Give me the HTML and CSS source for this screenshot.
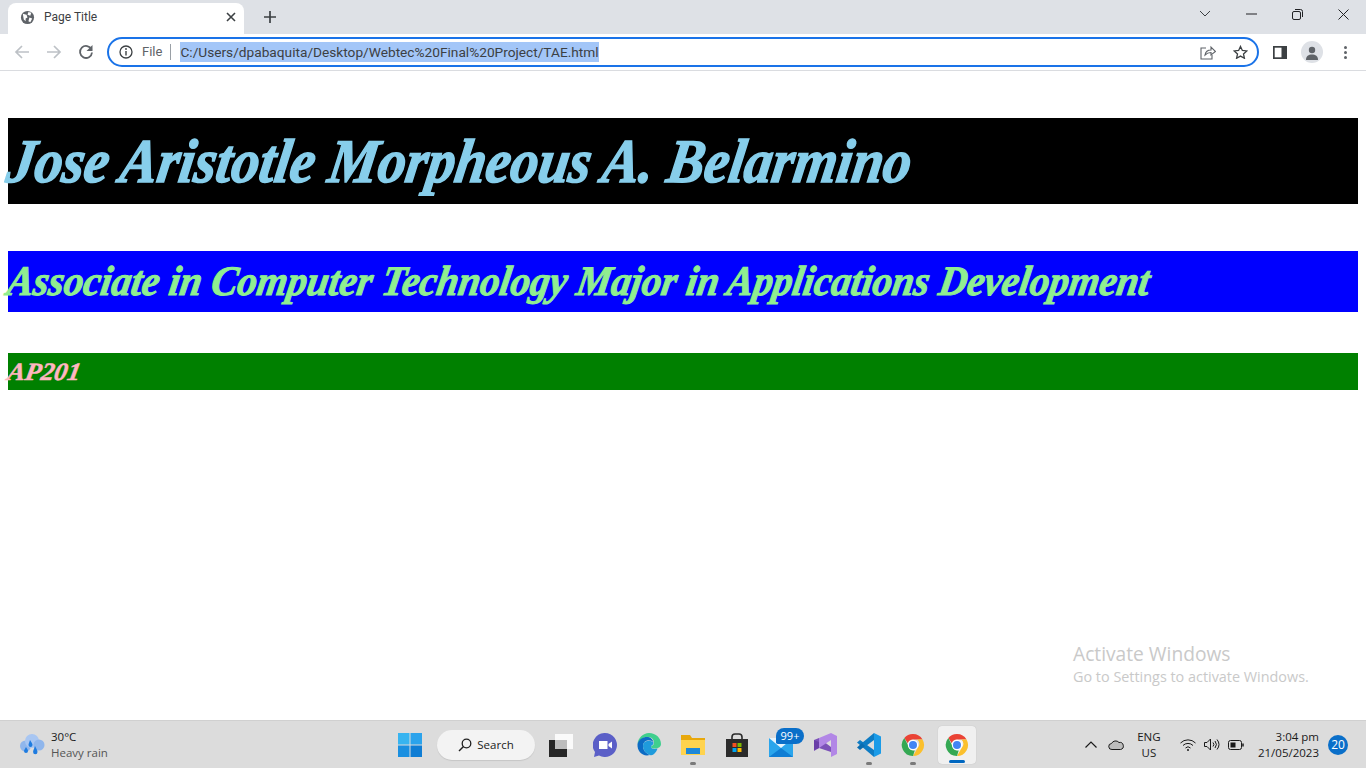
FILE: index.html
```html
<!DOCTYPE html>
<html>
<head>
  <meta charset="UTF-8">
  <title>Page Title</title>
  <link rel="stylesheet" href="styles.css">
</head>
<body>
  <svg class="defs" width="0" height="0">
    <symbol id="chrome" viewBox="0 0 24 24">
      <path d="M12 1a11 11 0 0 1 9.530 5.500H12a5.500 5.500 0 0 0-5.200 3.700L3.300 5A11 11 0 0 1 12 1z" fill="#ea4335"/>
      <path d="M21.530 6.500A11 11 0 0 1 12 23l4.760-8.250a5.500 5.500 0 0 0-.5-8.250z" fill="#fbc02d"/>
      <path d="M12 23A11 11 0 0 1 3.300 5l4.400 8.600a5.500 5.500 0 0 0 6 3.900L12 23z" fill="#34a853"/>
      <circle cx="12" cy="12" r="5.200" fill="#fff"/>
      <circle cx="12" cy="12" r="4" fill="#4285f4"/>
    </symbol>
  </svg>

  <div class="tab-strip">
    <div class="tab">
      <svg class="tab-icon" viewBox="0 0 16 16"><circle cx="8" cy="8" r="7" fill="#5f6368"/><path d="M3 4l4 1 1 3-2 1v3l-2-2zM9 2l3 1-1 3-3-1zM10 8l3 1-2 4-2-1z" fill="#fff"/></svg>
      <span class="tab-title">Page Title</span>
      <svg class="tab-close" viewBox="0 0 10 10"><path d="M1 1l8 8M9 1l-8 8" stroke="#3c4043" stroke-width="1.600"/></svg>
    </div>
    <svg class="new-tab" viewBox="0 0 12 12"><path d="M6 0v12M0 6h12" stroke="#3c4043" stroke-width="1.700"/></svg>
    <div class="window-btns">
      <div class="window-btn"><svg width="12" height="8" viewBox="0 0 12 8"><path d="M1 1l5 5 5-5" fill="none" stroke="#3c4043"/></svg></div>
      <div class="window-btn"><svg width="11" height="2" viewBox="0 0 11 2"><path d="M0 1h11" stroke="#202124"/></svg></div>
      <div class="window-btn"><svg width="11" height="11" viewBox="0 0 11 11"><rect x=".5" y="2.500" width="8" height="8" rx="1.500" fill="none" stroke="#202124"/><path d="M3 .5h5.500a2 2 0 0 1 2 2V8" fill="none" stroke="#202124"/></svg></div>
      <div class="window-btn"><svg width="11" height="11" viewBox="0 0 11 11"><path d="M.5.5l10 10M10.500.5l-10 10" stroke="#202124"/></svg></div>
    </div>
  </div>

  <div class="toolbar">
    <div class="nav-btn"><svg width="16" height="16" viewBox="0 0 16 16"><path d="M15 8H2M8 2L2 8l6 6" fill="none" stroke="#bdc1c6" stroke-width="1.700"/></svg></div>
    <div class="nav-btn"><svg width="16" height="16" viewBox="0 0 16 16"><path d="M1 8h13M8 2l6 6-6 6" fill="none" stroke="#bdc1c6" stroke-width="1.700"/></svg></div>
    <div class="nav-btn"><svg width="16" height="16" viewBox="0 0 16 16"><path d="M13.500 5.500A6 6 0 1 0 14 8.500" fill="none" stroke="#5f6368" stroke-width="1.800"/><path d="M14.500 1v6h-6z" fill="#5f6368"/></svg></div>
    <div class="omnibox">
      <svg class="info-icon" width="14" height="14" viewBox="0 0 14 14"><circle cx="7" cy="7" r="6" fill="none" stroke="#3c4043" stroke-width="1.300"/><path d="M7 6v4.500" stroke="#3c4043" stroke-width="1.400"/><circle cx="7" cy="4" r=".9" fill="#3c4043"/></svg>
      <span class="scheme">File</span>
      <span class="url"><span class="url-selected">C:/Users/dpabaquita/Desktop/Webtec%20Final%20Project/TAE.html</span></span>
      <svg class="omni-share" width="16" height="15" viewBox="0 0 16 15"><path d="M6 3H1v11h11v-4" fill="none" stroke="#5f6368" stroke-width="1.100"/><path d="M5 10c.5-3 3-5 6-5V2l4.500 4.500L11 10V7.500c-2.500 0-4.500 1-6 2.500z" fill="none" stroke="#5f6368" stroke-width="1.100"/></svg>
      <svg class="omni-star" width="15" height="14" viewBox="0 0 16 15"><path d="M8 1.500l2 4.400 4.700.5-3.500 3.200 1 4.600L8 11.900l-4.200 2.300 1-4.600L1.300 6.400 6 5.900z" fill="none" stroke="#3c4043" stroke-width="1.400"/></svg>
    </div>
    <div class="toolbar-right">
      <svg width="14" height="13" viewBox="0 0 14 13"><path d="M0 0h14v13H0z" fill="#3c4043"/><path d="M1.700 1.700h6.800v9.600H1.700z" fill="#fff"/></svg>
      <div class="avatar"><svg width="14" height="14" viewBox="0 0 14 14"><circle cx="7" cy="4" r="3.200" fill="#5f6368"/><path d="M1 14c0-4 2.500-5.500 6-5.500s6 1.500 6 5.500z" fill="#5f6368"/></svg></div>
      <div class="menu-dots"><i></i><i></i><i></i></div>
    </div>
  </div>

  <main class="page">
    <h1 class="band band-name"><span>Jose Aristotle Morpheous A. Belarmino</span></h1>
    <h2 class="band band-course"><span>Associate in Computer Technology Major in Applications Development</span></h2>
    <h3 class="band band-code"><span>AP201</span></h3>
    <div class="watermark">
      <div class="watermark-title">Activate Windows</div>
      <div class="watermark-sub">Go to Settings to activate Windows.</div>
    </div>
  </main>

  <footer class="taskbar">
    <div class="weather">
      <svg width="26" height="26" viewBox="0 0 26 26">
        <circle cx="6.500" cy="14" r="5.500" fill="#8fb6ec"/><circle cx="13" cy="9" r="7" fill="#a8c6f2"/><circle cx="20" cy="13" r="5.500" fill="#8fb6ec"/>
        <path d="M11 8c2 3 2.500 4 2.500 5a2 2 0 0 1-4 0c0-1 .5-2 1.500-5zM7 15c1.500 2.500 2 3 2 4a2 2 0 0 1-4 0c0-1 1-2 2-4zM16 14c1.500 3 2.500 4.500 2.500 6a2.200 2.200 0 0 1-4.400 0c0-1.500 1-3 1.900-6z" fill="#1e7ce0"/>
      </svg>
      <div class="weather-text">
        <div class="weather-temp">30°C</div>
        <div class="weather-desc">Heavy rain</div>
      </div>
    </div>

    <div class="task-icons">
      <div class="task-item start">
        <svg width="24" height="24" viewBox="0 0 24 24"><path d="M0 0h11.500v11.500H0z" fill="#37b4f0"/><path d="M12.500 0H24v11.500H12.500z" fill="#2ba3ec"/><path d="M0 12.500h11.500V24H0z" fill="#1a8fe0"/><path d="M12.500 12.500H24V24H12.500z" fill="#0f7dd4"/></svg>
      </div>
      <div class="search-pill">
        <svg width="14" height="14" viewBox="0 0 14 14"><circle cx="8.500" cy="5.500" r="4.300" fill="none" stroke="#202020" stroke-width="1.300"/><path d="M5.500 8.500L1 13" stroke="#202020" stroke-width="1.500"/></svg>
        <span>Search</span>
      </div>
      <div class="task-item">
        <svg width="24" height="24" viewBox="0 0 24 24"><path d="M6 1h18v15H6z" fill="#fafafa"/><path d="M0 7h18v17H0z" fill="#262626"/><path d="M6 7h12v9H6z" fill="#bdbdbd"/></svg>
      </div>
      <div class="task-item">
        <svg width="24" height="24" viewBox="0 0 24 24"><path d="M12 0a12 12 0 1 1-6 22.400L1 24l1-5A12 12 0 0 1 12 0z" fill="#5b5fc7"/><path d="M6 8h8.500v8H6z" fill="#fff"/><path d="M15.500 11l3.500-2.500v7L15.500 13z" fill="#fff"/></svg>
      </div>
      <div class="task-item">
        <svg width="24" height="24" viewBox="0 0 24 24"><path d="M12 0c7 0 12 5 12 11 0 3-3 4.500-6 4.500-2 0-4-.5-4-1.500 0-2 3-1 3-4C17 6 14 4 11 4 6 4 1.500 7.500.5 11 1 5 6 0 12 0z" fill="#3fcf8e"/><path d="M.5 11C1.500 6.500 6 4 10 4c3 0 6 2 6.500 5.500-2-3-8-3.500-10 1C5 14 7 20 13 22 6 24 0 19 .5 11z" fill="#0c6cc4"/><path d="M6.500 10.500C8 7 14 7 16.500 9.500c.5 2.500-2.500 2.500-2.500 4.500 0 2 4 2.500 6.500 1.500C19 20 16 23 13 22c-6-2-8-8-6.500-11.500z" fill="#1f9bdc"/></svg>
      </div>
      <div class="task-item running">
        <svg width="24" height="24" viewBox="0 0 24 24"><path d="M0 2h9l2 3h13v17H0z" fill="#e8a80c"/><path d="M0 7h24v15H0z" fill="#ffd34e"/><path d="M5 15h14v6H5z" fill="#1e88d8"/></svg>
      </div>
      <div class="task-item">
        <svg width="24" height="24" viewBox="0 0 24 24"><path d="M7 7V4a3 3 0 0 1 3-3h4a3 3 0 0 1 3 3v3" fill="none" stroke="#2b2b2b" stroke-width="1.600"/><path d="M1 6h22v18H1z" fill="#2b2b2b"/><path d="M7.500 10h4v4h-4z" fill="#f25022"/><path d="M12.500 10h4v4h-4z" fill="#7fba00"/><path d="M7.500 15h4v4h-4z" fill="#00a4ef"/><path d="M12.500 15h4v4h-4z" fill="#ffb900"/></svg>
      </div>
      <div class="task-item">
        <svg width="24" height="24" viewBox="0 0 24 24"><path d="M0 5h24v19H0z" fill="#2aa5ec"/><path d="M0 5h24L12 15z" fill="#e8f5fd"/><path d="M0 24l12-9 12 9z" fill="#0f7dd4"/></svg>
        <span class="mail-badge">99+</span>
      </div>
      <div class="task-item">
        <svg width="24" height="24" viewBox="0 0 24 24"><path d="M1 7l5-2 12 9v5l-12-4-5 3z" fill="#7c52b8"/><path d="M6 5l12-5 6 3v18l-6 3V7L6 15z" fill="#b287e6"/><path d="M1 7v10l5-2V9z" fill="#6a3fa8"/></svg>
      </div>
      <div class="task-item running">
        <svg width="24" height="24" viewBox="0 0 24 24"><path d="M17 0l7 3.500v17L17 24V0z" fill="#1a9be8"/><path d="M17 0v7l-8 6-4-3z" fill="#0e7cc4"/><path d="M17 24v-7L3 7 0 9.500z" fill="#0e7cc4"/><path d="M0 14.500L3 17l5-4-3-3z" fill="#0a6cb0"/></svg>
      </div>
      <div class="task-item running">
        <svg width="24" height="24"><use href="#chrome"/></svg>
      </div>
      <div class="task-item active">
        <svg width="24" height="24"><use href="#chrome"/></svg>
      </div>
    </div>

    <div class="tray">
      <svg class="tray-chevron" width="12" height="7" viewBox="0 0 12 7"><path d="M.5 6.500L6 1l5.500 5.500" fill="none" stroke="#1a1a1a" stroke-width="1.200"/></svg>
      <svg class="tray-cloud" width="16" height="11" viewBox="0 0 16 11"><path d="M4 10.500a3 3 0 0 1-.5-6A4.500 4.500 0 0 1 11 3.500a3.500 3.500 0 0 1 1.500 7z" fill="#bcbcbc" stroke="#1a1a1a"/></svg>
      <div class="tray-lang">ENG<br>US</div>
      <div class="tray-status">
        <svg width="16" height="12" viewBox="0 0 16 12"><path d="M.5 4a10.500 10.500 0 0 1 15 0M3 6.500a7 7 0 0 1 10 0M5.500 9a3.500 3.500 0 0 1 5 0" fill="none" stroke="#1a1a1a"/><circle cx="8" cy="11" r="1" fill="#1a1a1a"/></svg>
        <svg width="16" height="13" viewBox="0 0 16 13"><path d="M.5 4.500h2.500l3.500-3.500v11L3 8.500H.5z" fill="none" stroke="#1a1a1a"/><path d="M9 4.500a3 3 0 0 1 0 4M11 3a5.500 5.500 0 0 1 0 7M13 1.500a8 8 0 0 1 0 10" fill="none" stroke="#1a1a1a"/></svg>
        <svg width="16" height="10" viewBox="0 0 16 10"><rect x=".5" y=".5" width="13" height="9" rx="2" fill="none" stroke="#1a1a1a"/><rect x="2.500" y="2.500" width="5" height="5" fill="#1a1a1a"/><path d="M15 3.500v3" stroke="#1a1a1a" stroke-width="1.500"/></svg>
      </div>
      <div class="tray-clock">3:04 pm<br>21/05/2023</div>
      <span class="notif-badge">20</span>
    </div>
  </footer>
</body>
</html>
```

FILE: styles.css
```css
* {
  box-sizing: border-box;
  margin: 0;
  padding: 0;
}

body {
  height: 768px;
  overflow: hidden;
  display: flex;
  flex-direction: column;
  background: #fff;
  font-family: "Open Sans", "Noto Sans", sans-serif;
  color: #202124;
}

.defs {
  position: absolute;
}

.tab-strip {
  height: 34px;
  flex: none;
  display: flex;
  align-items: flex-end;
  background: #dee1e6;
  padding-left: 8px;
}

.tab {
  width: 236px;
  height: 31px;
  padding: 0 7px 3px 12px;
  display: flex;
  align-items: center;
  background: #fff;
  border-radius: 8px 8px 0 0;
}

.tab-icon {
  width: 15px;
  height: 15px;
}

.tab-title {
  flex: 1;
  margin-left: 9px;
  font-family: Roboto, sans-serif;
  font-size: 12px;
  color: #3c4043;
}

.tab-close {
  width: 10px;
  height: 10px;
  margin-right: 1px;
}

.new-tab {
  width: 12px;
  height: 12px;
  margin: 0 0 11px 20px;
}

.window-btns {
  margin-left: auto;
  align-self: flex-start;
  display: flex;
}

.window-btn {
  width: 46px;
  height: 28px;
  display: flex;
  align-items: center;
  justify-content: center;
}

.toolbar {
  height: 37px;
  flex: none;
  display: flex;
  align-items: center;
  padding-left: 6px;
  background: #fff;
  border-bottom: 1px solid #dadce0;
}

.nav-btn {
  width: 32px;
  height: 28px;
  display: flex;
  align-items: center;
  justify-content: center;
}

.omnibox {
  width: 1152px;
  height: 30px;
  margin-left: 5px;
  padding: 0 9px 0 10px;
  display: flex;
  align-items: center;
  border: 2px solid #1a73e8;
  border-radius: 15px;
  font-family: Roboto, sans-serif;
}

.scheme {
  margin-left: 9px;
  padding-right: 8px;
  border-right: 1px solid #9aa0a6;
  font-size: 13px;
  line-height: 16px;
  color: #5f6368;
}

.url {
  flex: 1;
  margin-left: 9px;
  font-size: 13.7px;
  line-height: 20px;
}

.url-selected {
  display: inline-block;
  background: #a3c6f8;
  color: #3c4043;
}

.omni-star {
  margin-left: 17px;
}

.toolbar-right {
  flex: 1;
  display: flex;
  align-items: center;
  padding-left: 14px;
}

.avatar {
  width: 22px;
  height: 22px;
  margin-left: 14px;
  display: flex;
  align-items: flex-end;
  justify-content: center;
  padding-bottom: 3px;
  border-radius: 50%;
  background: #dee1e6;
}

.menu-dots {
  margin-left: 21px;
  display: flex;
  flex-direction: column;
  gap: 2px;
}

.menu-dots i {
  width: 3px;
  height: 3px;
  border-radius: 50%;
  background: #5f6368;
}

.page {
  position: relative;
  flex: 1;
  padding: 47px 8px 0;
}

.band {
  font-family: "Liberation Serif", serif;
  font-style: italic;
  font-weight: 700;
  white-space: nowrap;
}

/* the real heading font is a brush script, so the closest italic is narrowed and leaned */
.band span {
  display: inline-block;
  transform-origin: left center;
}

.band-name {
  height: 86px;
  background: #000;
  color: skyblue;
  font-size: 62px;
  line-height: 86px;
  -webkit-text-stroke: 1.5px skyblue;
}

.band-name span {
  transform: scaleX(0.895) skewX(-10deg);
}

.band-course {
  height: 61px;
  margin-top: 47px;
  background: #00f;
  color: lightgreen;
  font-size: 42px;
  line-height: 61px;
  -webkit-text-stroke: 1px lightgreen;
}

.band-course span {
  transform: scaleX(0.93) skewX(-10deg);
}

.band-code {
  height: 37px;
  margin-top: 41px;
  background: green;
  color: lightpink;
  font-size: 25px;
  line-height: 37px;
  -webkit-text-stroke: 0.5px lightpink;
}

.band-code span {
  transform: scaleX(1.05) skewX(-10deg);
}

.watermark {
  position: absolute;
  left: 1073px;
  top: 570px;
  color: #c9c9c9;
}

.watermark-title {
  font-size: 19.2px;
  line-height: 26px;
}

.watermark-sub {
  font-size: 14.4px;
  line-height: 20px;
}

.taskbar {
  height: 48px;
  flex: none;
  display: grid;
  grid-template-columns: 1fr auto 1fr;
  align-items: center;
  background: #dcdcdc;
  border-top: 1px solid #d0d0d0;
  font-size: 12px;
  color: #1a1a1a;
}

.weather {
  display: flex;
  align-items: center;
  padding-left: 19px;
}

.weather-text {
  margin-left: 6px;
  line-height: 16px;
  font-size: 11.5px;
}

.weather-desc {
  color: #555;
}

.task-icons {
  display: flex;
  align-items: center;
}

.task-item {
  position: relative;
  width: 44px;
  height: 38px;
  display: flex;
  align-items: center;
  justify-content: center;
}

.start {
  width: 46px;
}

.running::after,
.active::after {
  content: "";
  position: absolute;
  bottom: -1px;
  left: 19px;
  width: 6px;
  height: 3px;
  border-radius: 2px;
  background: #7a7a7a;
}

.active {
  width: 38px;
  margin: 0 3px;
  background: #f0f0f0;
  border-radius: 4px;
  box-shadow: 0 0 1px rgba(0, 0, 0, 0.2);
}

.active::after {
  left: 11px;
  bottom: 1px;
  width: 16px;
  background: #0067c0;
}

.search-pill {
  width: 98px;
  height: 30px;
  margin: 0 4px;
  display: flex;
  align-items: center;
  justify-content: center;
  gap: 5px;
  border-radius: 15px;
  background: #f3f3f3;
  box-shadow: 0 1px 1px rgba(0, 0, 0, 0.1);
  font-size: 11.5px;
}

.mail-badge {
  position: absolute;
  top: 2px;
  left: 17px;
  width: 28px;
  text-align: center;
  border-radius: 9px 9px 9px 2px;
  background: #0a6fc9;
  color: #fff;
  font-size: 11px;
  line-height: 16px;
}

.tray {
  display: flex;
  align-items: center;
  justify-content: flex-end;
  padding-right: 18px;
}

.tray-cloud {
  margin-left: 11px;
}

.tray-lang {
  width: 32px;
  margin-left: 9px;
  text-align: center;
  line-height: 16px;
  font-size: 11.5px;
}

.tray-status {
  margin-left: 15px;
  display: flex;
  align-items: center;
  gap: 8px;
}

.tray-clock {
  margin-left: 14px;
  text-align: right;
  line-height: 16px;
  font-size: 11.5px;
}

.notif-badge {
  width: 20px;
  height: 20px;
  margin-left: 9px;
  border-radius: 50%;
  background: #0a6fc9;
  color: #fff;
  text-align: center;
  line-height: 20px;
  font-size: 12px;
}
```
